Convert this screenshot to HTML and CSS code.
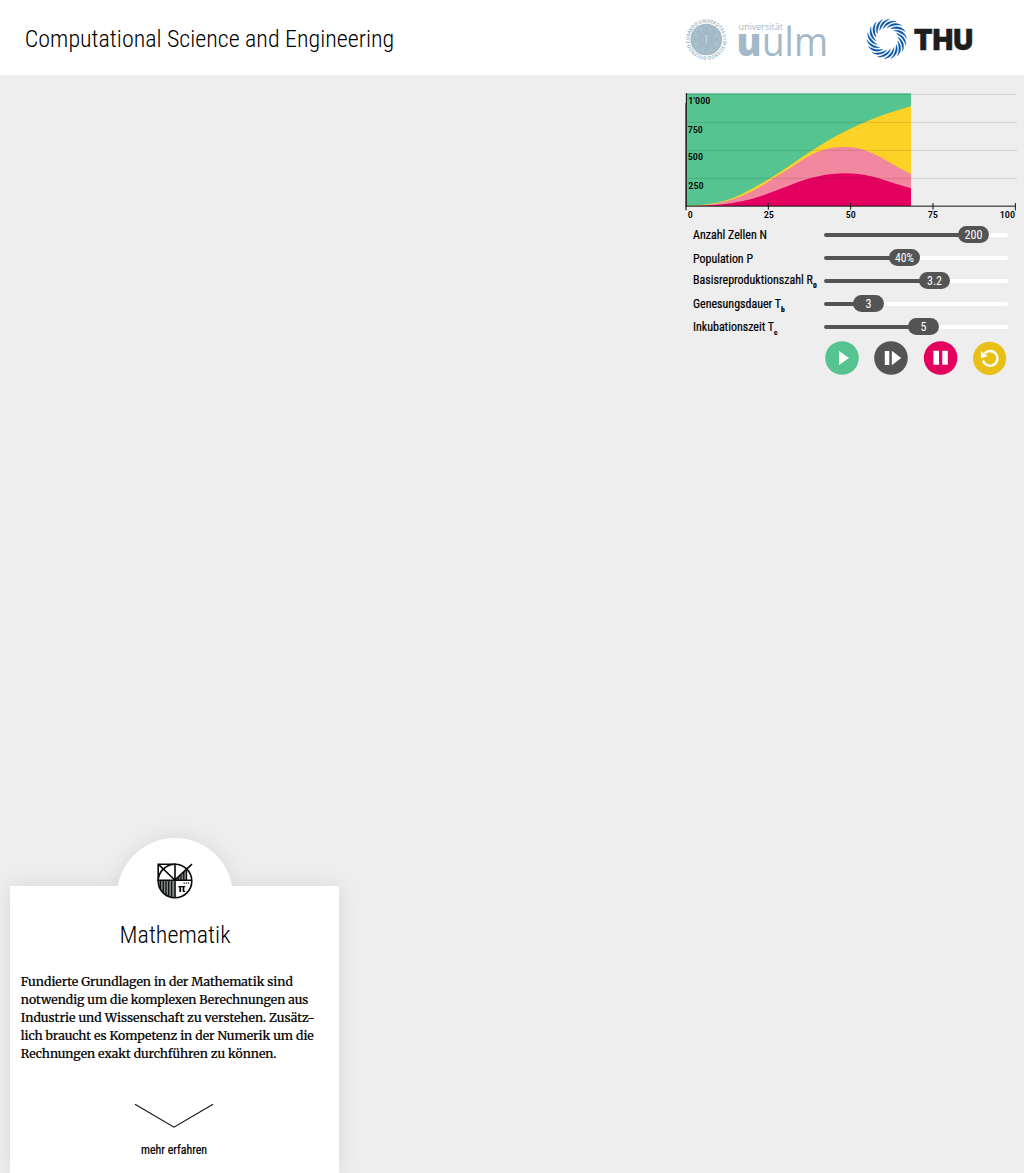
FILE: index.html
```html
<!DOCTYPE html>
<html lang="de">
<head>
<meta charset="utf-8">
<title>Computational Science and Engineering</title>
<link rel="stylesheet" href="styles.css">
</head>
<body>
<header class="header">
  <svg class="title" width="400" height="75"><text class="light" x="24.8" y="47" font-size="24.5" textLength="369.5" lengthAdjust="spacingAndGlyphs">Computational Science and Engineering</text></svg>
  <div class="logos">
    <svg class="logo-uulm" width="150" height="60" viewBox="0 0 150 60">
      <defs><path id="seal-ring" d="M26.3 46.3A16.8 16.8 0 1 1 26.4 46.3"/></defs>
      <circle cx="26.3" cy="29.5" r="15.8" fill="#a2b9c7"/>
      <g fill="none" stroke="#b9cad5" stroke-width=".7">
        <circle cx="26.3" cy="21" r="5"/><circle cx="26.3" cy="38" r="5"/>
        <circle cx="17.8" cy="29.5" r="5"/><circle cx="34.8" cy="29.5" r="5"/>
        <circle cx="20.3" cy="23.5" r="5"/><circle cx="32.3" cy="35.5" r="5"/>
        <circle cx="20.3" cy="35.5" r="5"/><circle cx="32.3" cy="23.5" r="5"/>
      </g>
      <circle cx="26.3" cy="29.5" r="9" fill="#a2b9c7"/>
      <path d="M26.3 25v9M24.8 26.5q1.5 1.5 3 0M25 30q1.4 1 2.6-1" fill="none" stroke="#ccd9e0" stroke-width=".8"/>
      <text class="seal" font-size="5"><textPath href="#seal-ring" textLength="105" lengthAdjust="spacingAndGlyphs">DOCENDO·CURANDO·UNIVERSITAS ULM·SCIENDO·</textPath></text>
      <text class="uni" x="58.5" y="19.6" font-size="9.3" textLength="44.5" lengthAdjust="spacingAndGlyphs">universität</text>
      <text class="ulm bold" x="56.6" y="45.7" font-size="38" textLength="25" lengthAdjust="spacingAndGlyphs">u</text>
      <text class="ulm" x="82" y="45.7" font-size="40.5" textLength="66" lengthAdjust="spacingAndGlyphs">ulm</text>
    </svg>
    <svg class="logo-thu" width="125" height="60" viewBox="0 0 125 60">
      <defs><path id="blade" d="M0-11C3-15 8.5-17.4 14.9-13.4C10.5-14.6 5-13.6 0-11Z"/></defs>
      <g id="blades" fill="#0a57a5" stroke="#0a57a5" stroke-width=".3" transform="translate(26.8 29)"></g>
      <text class="thu" x="53.7" y="39.6" font-size="29" textLength="59.5" lengthAdjust="spacingAndGlyphs">THU</text>
    </svg>
  </div>
</header>
<main class="stage">
  <section class="panel">
    <svg class="chart" width="344" height="140" viewBox="0 0 1032 420">
      <path d="M19 25H693V363H19z" fill="#56c490"/>
      <path d="M19 363C95 361 140 350 190 325C285 277 350 225 400 194C500 130 590 92 693 64V363z" fill="#fcd227"/>
      <path d="M19 363C180 363 245 299 330 250C390 207 430 186 497 186C570 186 628 236 693 267V363z" fill="#f2889f"/>
      <path d="M19 363C195 363 238 334 330 301C394 276 440 265 497 265C575 265 630 294 693 310V363z" fill="#e4005e"/>
      <g class="grid"><path d="M19 28H1009M19 112H1011M19 196H1011M19 280H1011"/></g>
      <path d="M19 24V364" stroke="#000" stroke-width="3"/><path d="M18 55V376" stroke="#333" stroke-width="4"/>
      <path d="M17 363.5H1007M265 354V374M512 354V374M759 354V374M1006 354V376" fill="none" stroke="#111" stroke-width="3"/>
      <g class="ticks" font-size="29">
        <text x="25" y="57" textLength="66" lengthAdjust="spacingAndGlyphs">1′000</text><text x="23" y="144" textLength="45" lengthAdjust="spacingAndGlyphs">750</text><text x="23" y="225" textLength="46" lengthAdjust="spacingAndGlyphs">500</text><text x="25" y="311" textLength="46" lengthAdjust="spacingAndGlyphs">250</text>
        <text x="23" y="399" textLength="15" lengthAdjust="spacingAndGlyphs">0</text><text x="251" y="399" textLength="31" lengthAdjust="spacingAndGlyphs">25</text><text x="497" y="399" textLength="30" lengthAdjust="spacingAndGlyphs">50</text><text x="743" y="399" textLength="31" lengthAdjust="spacingAndGlyphs">75</text><text x="959" y="399" textLength="46" lengthAdjust="spacingAndGlyphs">100</text>
      </g>
    </svg>
    <div class="sliders" id="sliders"></div>
    <div class="controls">
      <svg width="34" height="34" viewBox="0 0 34 34"><circle cx="17" cy="17" r="16.8" fill="#56c490"/><path d="M14 10l10 7-10 7z" fill="#fff"/></svg>
      <svg width="34" height="34" viewBox="0 0 34 34"><circle cx="17" cy="17" r="16.8" fill="#545454"/><path d="M10.8 10h4.5v14h-4.5zM17.8 9.8l9.4 7.2-9.4 7.2z" fill="#fff"/></svg>
      <svg width="34" height="34" viewBox="0 0 34 34"><circle cx="16.6" cy="17" r="16.8" fill="#e4005e"/><path d="M9.4 9.8H15v14H9.4zM18.3 9.8h5.5v14h-5.5z" fill="#fff"/></svg>
      <svg width="34" height="34" viewBox="0 0 34 34"><circle cx="16.6" cy="17.3" r="16.6" fill="#e9c016"/><path d="M11.6 12.4A7.4 7.4 0 1 1 10 19.6" fill="none" stroke="#fff" stroke-width="2.4"/><path d="M7.7 10.2l.5 7 6.8-2.2z" fill="#fff"/></svg>
    </div>
  </section>
  <article class="card">
    <div class="bump">
      <svg width="38" height="38" viewBox="0 0 38 38">
        <defs><clipPath id="disc"><circle cx="19" cy="19" r="16.5"/></clipPath></defs>
        <g clip-path="url(#disc)" stroke="#111" fill="none"><path d="M2 18H18.5V37H2z" fill="#858a8b" stroke="none"/><path d="M18.5 18L31 7V18z" fill="#858a8b" stroke="none"/><path stroke-width="1.3" d="M4.5 18v19M7.3 18v19M10 18v19M12.7 18v19M15.6 18v19M22.5 15v3M25 13v5M27.7 10v8M30.5 7.5v10.5"/></g>
        <g fill="none" stroke="#080808" stroke-width="1.6"><circle cx="19" cy="19" r="16.8"/><path d="M2.2 19V2.2H19V36M2.2 18.3H35.5M2.2 2.2L18.8 18L36 2.2"/></g>
        <text class="pi" x="22" y="29.6" font-size="11">π</text><path d="M27.5 21.1h6.5" stroke="#111" stroke-width="1.2" stroke-dasharray="1.2 1"/>
      </svg>
    </div>
    <div class="card-body">
      <svg class="card-title" width="329" height="50"><text class="light" x="109.6" y="33" font-size="24.5" textLength="111" lengthAdjust="spacingAndGlyphs">Mathematik</text></svg>
      <svg class="copy" width="329" height="90"><g font-size="12.5">
        <text x="10.8" y="12" textLength="272" lengthAdjust="spacingAndGlyphs">Fundierte Grundlagen in der Mathematik sind</text>
        <text x="10.8" y="30" textLength="287.5" lengthAdjust="spacingAndGlyphs">notwendig um die komplexen Berechnungen aus</text>
        <text x="10.8" y="48" textLength="294" lengthAdjust="spacingAndGlyphs">Industrie und Wissenschaft zu verstehen. Zusätz-</text>
        <text x="10.8" y="66" textLength="293" lengthAdjust="spacingAndGlyphs">lich braucht es Kompetenz in der Numerik um die</text>
        <text x="10.8" y="84" textLength="255.5" lengthAdjust="spacingAndGlyphs">Rechnungen exakt durchführen zu können.</text>
      </g></svg>
      <svg class="more" width="329" height="65"><path d="M125 4.2L164 27.2L203 4.2" fill="none" stroke="#111" stroke-width="1.15"/><text class="label" x="131" y="54" font-size="12" textLength="66" lengthAdjust="spacingAndGlyphs">mehr erfahren</text></svg>
    </div>
  </article>
</main>
<script src="app.js"></script>
</body>
</html>
```
FILE: styles.css
```css
* { box-sizing: border-box; }
body { margin: 0; background: #eee; font-family: "Roboto Condensed", Roboto, sans-serif; height: 1173px; overflow: hidden; display: flex; flex-direction: column; }
svg { display: block; overflow: visible; }
text { font-family: "Roboto Condensed", Roboto, sans-serif; font-stretch: condensed; fill: #000; }
.header { height: 75px; flex: none; background: #fff; display: flex; justify-content: space-between; }
.logos { display: flex; padding-top: 10px; width: 344px; gap: 30px; }
.light { font-weight: 300; }
.uni, .ulm, .seal { font-family: "Open Sans", sans-serif; fill: #a2b9c7; font-weight: 500; font-stretch: normal; }
.ulm { font-weight: 400; }
.ulm.bold { font-weight: 800; }
.seal { font-weight: 700; }
.thu { font-family: Inter, sans-serif; font-weight: 900; font-stretch: normal; fill: #1d1d1b; stroke: #1d1d1b; stroke-width: .5px; }
.stage { flex: 1; display: flex; flex-direction: column; justify-content: space-between; }
.panel { width: 344px; align-self: flex-end; padding-top: 10px; }
.grid { fill: none; stroke: #000; stroke-opacity: .12; stroke-width: 3; }
.ticks text { font-weight: 500; }
.sliders { display: flex; flex-direction: column; }
.slider { display: flex; height: 23px; padding-left: 13px; }
.name { width: 131px; flex: none; }
.name text, .label { stroke: #000; stroke-width: .2px; }
.track { position: relative; width: 184px; height: 4px; margin-top: 7.5px; border-radius: 2px; background: #fff; }
.fill { height: 4px; border-radius: 2px; background: #545454; }
.knob { position: absolute; top: -7px; width: 31px; height: 17px; border-radius: 8.5px; background: #545454; }
.knob text { fill: #fff; text-anchor: middle; }
.controls { display: flex; gap: 15.3px; padding: 1px 0 0 145px; }
.card { width: 329px; height: 335px; margin-left: 10px; display: flex; flex-direction: column; filter: drop-shadow(0 0 10px rgba(0,0,0,.09)); }
.bump { flex: none; width: 116px; height: 116px; margin: 0 0 -68px 107px; padding: 24px 0 0 38.5px; border-radius: 50%; background: #fff; }
.bump svg { position: relative; z-index: 1; }
.card-body { flex: 1; background: #fff; padding-top: 24px; }
.copy { margin-top: 14px; }
.copy text { font-family: Merriweather, "Noto Serif", "DejaVu Serif Condensed", "DejaVu Serif", serif; font-stretch: normal; stroke: #000; stroke-width: .2px; }
.more { margin-top: 36px; }
.pi { font-family: "DejaVu Sans", sans-serif; font-weight: 700; }
```
FILE: app.js
```js
const rows = [
  ['Anzahl Zellen N', 74, '', 0, 7, 150, '200', 18],
  ['Population P', 60, '', 0, 8, 81, '40%', 19],
  ['Basisreproduktionszahl R', 120, '0', 120, 6, 111, '3.2', 15],
  ['Genesungsdauer T', 88, 'b', 88, 7, 45, '3', 6],
  ['Inkubationszeit T', 81, 'c', 81, 7, 100, '5', 6]
];
document.getElementById('sliders').innerHTML = rows.map(([name, w, sub, sx, y, pos, value, vw]) => `
<div class="slider">
  <svg class="name" height="23"><text x="0" y="${y + 7}" font-size="12" textLength="${w}" lengthAdjust="spacingAndGlyphs">${name}</text><text x="${sx}" y="${y + 11}" font-size="7.5" font-weight="700">${sub}</text></svg>
  <div class="track"><div class="fill" style="width:${pos}px"></div><div class="knob" style="left:${pos - 16}px"><svg width="31" height="17"><text x="15.5" y="12.5" font-size="12.3" textLength="${vw}" lengthAdjust="spacingAndGlyphs">${value}</text></svg></div></div>
</div>`).join('');
document.getElementById('blades').innerHTML = Array.from({ length: 18 }, (_, i) => `<use href="#blade" transform="rotate(${i * 20})"/>`).join('');
```
